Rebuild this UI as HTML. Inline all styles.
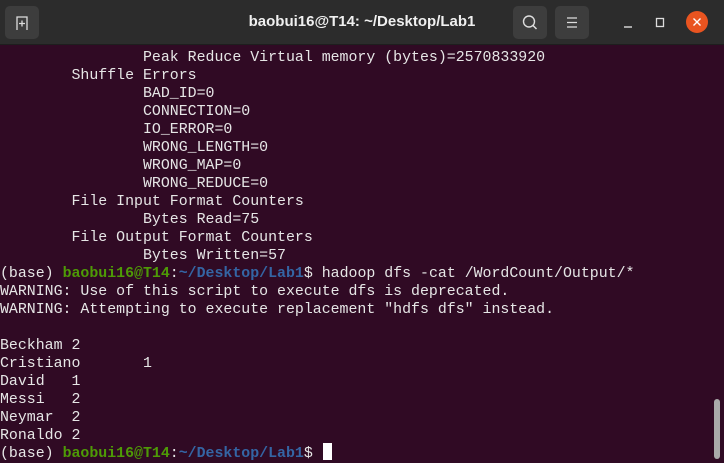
<!DOCTYPE html>
<html><head><style>
body{margin:0;width:724px;height:460px;overflow:hidden;background:#300a24;position:relative;font-family:"Liberation Sans",sans-serif}
#tb{position:absolute;left:0;top:0;width:724px;height:45px;background:#2c2c2c;border-bottom:1px solid #1e1e1e;box-sizing:border-box}
.btn{position:absolute;top:6px;width:34px;height:33px;background:#3d3d3d;border-radius:5px}
#title{position:absolute;left:0;width:724px;top:13px;text-align:center;color:#f0f0f0;font-weight:bold;font-size:15px}
#term{position:absolute;left:0;top:49px;margin:0;font-family:"Liberation Mono",monospace;font-size:14.9px;line-height:18px;color:#e6e6e6;white-space:pre}
.g{color:#4e9a06;font-weight:bold}.b{color:#3465a4;font-weight:bold}
</style></head><body>
<div id="tb">
<div class="btn" style="left:5px"><svg width="34" height="33"><path d="M12 24V11h10v13M14 17.5h6M17 14.5v6" stroke="#ddd" stroke-width="1.3" fill="none"/></svg></div>
<div id="title">baobui16@T14: ~/Desktop/Lab1</div>
<div class="btn" style="left:513px"><svg width="34" height="33"><circle cx="16" cy="15.5" r="5.5" stroke="#ddd" stroke-width="1.4" fill="none"/><path d="M20 19.5l3.5 3.5" stroke="#ddd" stroke-width="1.5"/></svg></div>
<div class="btn" style="left:555px"><svg width="34" height="33"><path d="M12 12h10M12 16.5h10M12 21h10" stroke="#ddd" stroke-width="1.3"/></svg></div>
<svg style="position:absolute;left:620px;top:10px" width="95" height="26"><path d="M4 17h8" stroke="#ddd" stroke-width="1.4"/><rect x="36.5" y="8.5" width="7" height="8" stroke="#ddd" stroke-width="1.3" fill="none"/><circle cx="77" cy="12" r="11" fill="#e95420"/><path d="M73.5 8.5l7 7M80.5 8.5l-7 7" stroke="#fff" stroke-width="1.4"/></svg>
</div>
<pre id="term">                Peak Reduce Virtual memory (bytes)=2570833920
        Shuffle Errors
                BAD_ID=0
                CONNECTION=0
                IO_ERROR=0
                WRONG_LENGTH=0
                WRONG_MAP=0
                WRONG_REDUCE=0
        File Input Format Counters
                Bytes Read=75
        File Output Format Counters
                Bytes Written=57
(base) <span class="g">baobui16@T14</span>:<span class="b">~/Desktop/Lab1</span>$ hadoop dfs -cat /WordCount/Output/*
WARNING: Use of this script to execute dfs is deprecated.
WARNING: Attempting to execute replacement "hdfs dfs" instead.

Beckham 2
Cristiano       1
David   1
Messi   2
Neymar  2
Ronaldo 2
(base) <span class="g">baobui16@T14</span>:<span class="b">~/Desktop/Lab1</span>$ </pre>
<div style="position:absolute;left:323px;top:443px;width:9px;height:17px;background:#fff"></div>
<div style="position:absolute;left:714px;top:399px;width:6px;height:60px;background:#aaa;border-radius:3px"></div>
</body></html>
